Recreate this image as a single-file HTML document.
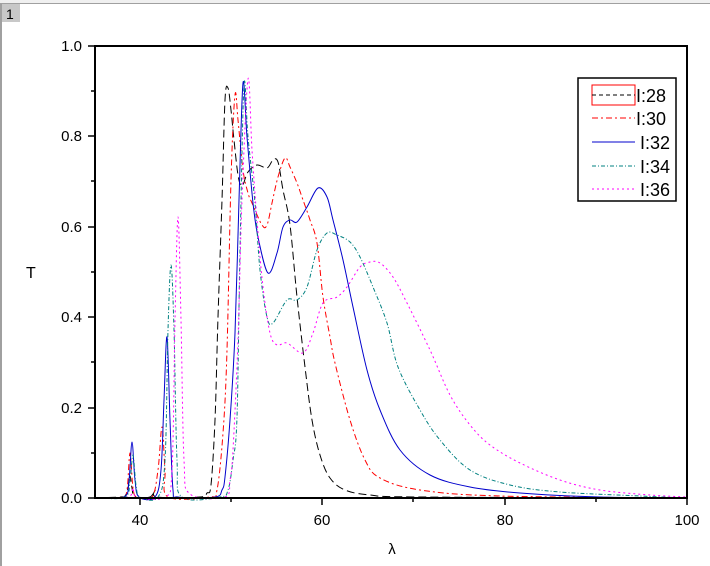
<!DOCTYPE html>
<html><head><meta charset="utf-8"><style>
html,body{margin:0;padding:0;background:#fff;width:710px;height:566px;overflow:hidden}
text{font-family:"Liberation Sans",Arial,sans-serif}
</style></head><body>
<svg id="s" width="710" height="566" viewBox="0 0 710 566" xmlns="http://www.w3.org/2000/svg">
<rect x="0" y="0" width="710" height="566" fill="#fff"/>
<rect x="0" y="0" width="710" height="3" fill="#f0f0f0"/>
<line x1="0" y1="3.5" x2="710" y2="3.5" stroke="#a0a0a0"/>
<rect x="0" y="3" width="2" height="563" fill="#a0a0a0"/>
<rect x="2" y="4" width="18" height="18" fill="#c8c8c8"/>
<text x="6" y="19" font-size="14">1</text>
<g id="curves" fill="none" stroke-width="1"></g>
<rect x="95" y="46" width="592" height="452" fill="none" stroke="#000" stroke-width="2"/>
<g stroke="#000" stroke-width="1.5">
<line x1="140" y1="498" x2="140" y2="505"/><line x1="322" y1="498" x2="322" y2="505"/><line x1="505" y1="498" x2="505" y2="505"/><line x1="687" y1="498" x2="687" y2="505"/>
<line x1="231" y1="498" x2="231" y2="502"/><line x1="413" y1="498" x2="413" y2="502"/><line x1="596" y1="498" x2="596" y2="502"/>
<line x1="88" y1="498" x2="95" y2="498"/><line x1="88" y1="408" x2="95" y2="408"/><line x1="88" y1="317" x2="95" y2="317"/><line x1="88" y1="227" x2="95" y2="227"/><line x1="88" y1="136" x2="95" y2="136"/><line x1="88" y1="46" x2="95" y2="46"/>
<line x1="91" y1="453" x2="95" y2="453"/><line x1="91" y1="362" x2="95" y2="362"/><line x1="91" y1="272" x2="95" y2="272"/><line x1="91" y1="181" x2="95" y2="181"/><line x1="91" y1="91" x2="95" y2="91"/>
</g>
<g font-size="15" text-anchor="end">
<text x="82" y="503">0.0</text><text x="82" y="413">0.2</text><text x="82" y="322">0.4</text><text x="82" y="232">0.6</text><text x="82" y="141">0.8</text><text x="82" y="51">1.0</text>
</g>
<g font-size="15" text-anchor="middle">
<text x="140" y="525">40</text><text x="322" y="525">60</text><text x="505" y="525">80</text><text x="687" y="525">100</text>
<text x="392" y="554">λ</text>
</g>
<text x="26" y="278" font-size="16">T</text>
<rect x="578" y="78" width="98" height="123" fill="#fff" stroke="#000" stroke-width="1.5"/>
<rect x="592" y="85" width="43" height="20" fill="none" stroke="red" stroke-width="1"/>
<g stroke-width="1">
<line x1="592" y1="95" x2="635" y2="95" stroke="#000" stroke-dasharray="4,3"/>
<line x1="592" y1="118" x2="635" y2="118" stroke="red" stroke-dasharray="6,3,2,3"/>
<line x1="592" y1="142" x2="635" y2="142" stroke="#0000cc"/>
<line x1="592" y1="166" x2="635" y2="166" stroke="#008080" stroke-dasharray="4,2,1,2"/>
<line x1="592" y1="189" x2="635" y2="189" stroke="#ff00ff" stroke-dasharray="2,3"/>
</g>
<g font-size="18">
<text x="636" y="102">I:28</text><text x="636" y="125">I:30</text><text x="640" y="149">I:32</text><text x="640" y="173">I:34</text><text x="640" y="196">I:36</text>
</g>
</svg>
<script>
var C=[
["#000","8,4",[[96,498],[120,497],[125,496],[128,488],[130,476],[132,488],[135,497],[150,497],[155,490],[157,497],[200,497],[207,493],[211,485],[215,420],[218,317],[222,200],[225,100],[228,88],[231,110],[234,140],[238,175],[242,186],[248,172],[257,165],[267,168],[273,160],[278,162],[283,190],[290,225],[297,297],[305,367],[312,420],[320,455],[330,478],[345,490],[370,495],[420,497],[687,498]]],
["red","6,3,2,3",[[96,498],[122,497],[127,490],[130,453],[133,488],[137,497],[152,497],[158,470],[162,427],[165,470],[168,497],[210,497],[217,490],[223,433],[227,350],[231,180],[235,95],[238,120],[243,170],[248,193],[252,203],[262,225],[267,225],[272,203],[278,177],[285,158],[290,167],[297,183],[303,200],[310,220],[317,243],[323,297],[330,337],[335,363],[350,420],[365,460],[380,478],[420,490],[500,496],[687,498]]],
["#0000cc","",[[96,498],[124,497],[129,480],[132,442],[135,480],[139,497],[155,497],[161,470],[164,400],[167,337],[170,420],[173,490],[178,497],[215,497],[222,490],[225,477],[230,420],[235,333],[239,200],[243,83],[247,137],[253,203],[258,237],[268,273],[277,253],[283,227],[290,220],[297,222],[307,207],[318,188],[327,197],[333,220],[343,260],[353,307],[367,370],[380,410],[400,450],[430,475],[470,487],[520,493],[600,497],[687,498]]],
["#008080","4,2,1,2",[[96,498],[125,497],[130,480],[133,455],[136,485],[140,497],[158,497],[165,460],[168,330],[171,265],[174,330],[177,460],[182,497],[220,497],[228,490],[233,460],[237,417],[240,250],[244,85],[248,137],[255,203],[260,270],[267,317],[273,323],[287,300],[297,300],[307,287],[317,250],[327,233],[337,235],[350,242],[360,257],[373,287],[387,323],[398,367],[420,410],[440,440],[470,470],[510,485],[560,492],[640,496],[687,498]]],
["#ff00ff","2,3",[[96,498],[128,497],[133,488],[137,497],[165,497],[172,470],[175,320],[178,217],[181,320],[184,460],[190,494],[225,497],[230,480],[233,450],[238,340],[242,200],[248,79],[252,150],[257,220],[263,287],[270,333],[277,345],[287,343],[303,353],[313,333],[323,303],[337,297],[347,287],[360,267],[370,262],[380,263],[393,277],[407,303],[430,350],[450,395],[470,425],[490,445],[520,463],[560,480],[600,490],[650,495],[687,497]]]
];
var g=document.getElementById('curves');
C.forEach(function(c){
var p=c[2],d="M"+p[0][0]+","+p[0][1];
for(var i=0;i<p.length-1;i++){
var p0=p[i-1]||p[i],p1=p[i],p2=p[i+1],p3=p[i+2]||p2;
var c1x=p1[0]+(p2[0]-p0[0])/6,c1y=p1[1]+(p2[1]-p0[1])/6,c2x=p2[0]-(p3[0]-p1[0])/6,c2y=p2[1]-(p3[1]-p1[1])/6;
d+=" C"+c1x.toFixed(1)+","+c1y.toFixed(1)+" "+c2x.toFixed(1)+","+c2y.toFixed(1)+" "+p2[0]+","+p2[1];}
var e=document.createElementNS("http://www.w3.org/2000/svg","path");
e.setAttribute("d",d);e.setAttribute("stroke",c[0]);if(c[1])e.setAttribute("stroke-dasharray",c[1]);
g.appendChild(e);});
</script>
</body></html>
